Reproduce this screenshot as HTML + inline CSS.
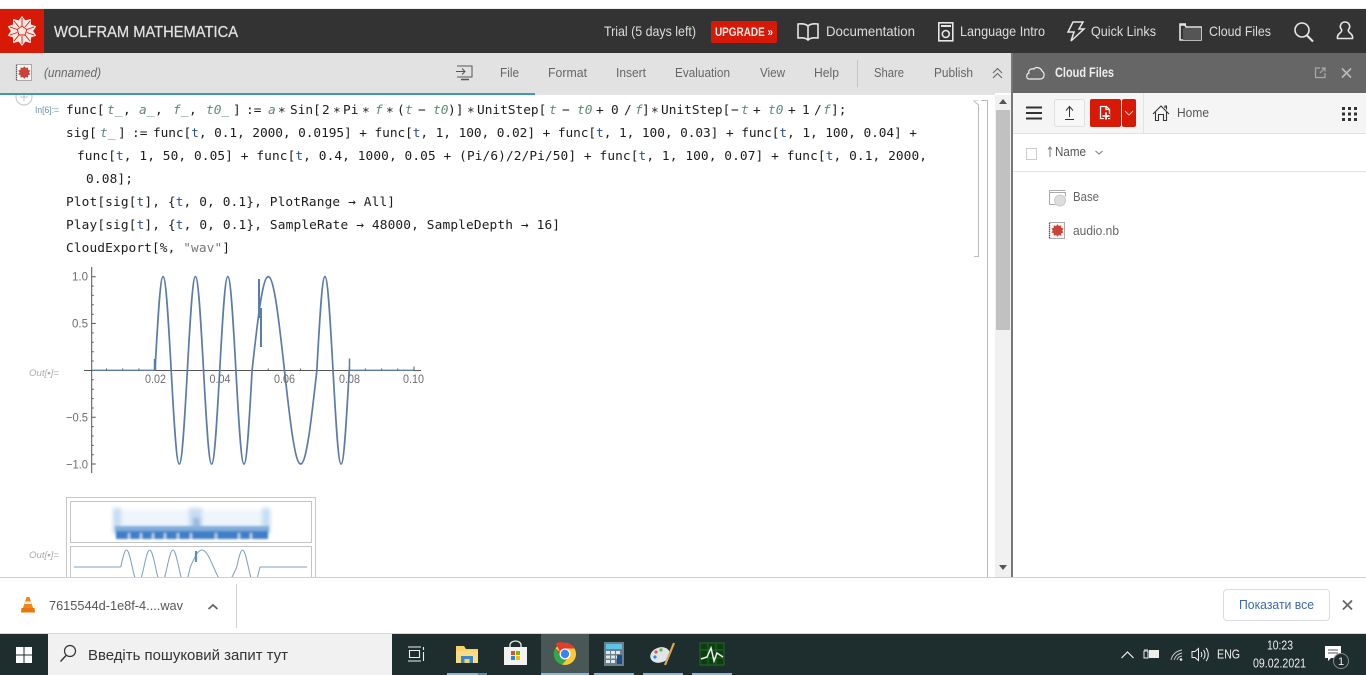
<!DOCTYPE html>
<html><head><meta charset="utf-8"><title>Wolfram Mathematica</title>
<style>html,body{margin:0;padding:0;background:#fff;overflow:hidden}svg{display:block}
text{font-family:"Liberation Sans",sans-serif}
.c{font-family:"DejaVu Sans Mono","Liberation Mono",monospace!important;font-size:12.8px;fill:#1c1c1c}
.g{fill:#5f8a72;font-style:italic}.b{fill:#2f4f8f}.s{fill:#777}
.h{font-size:14px;fill:#ddd}.t{font-size:13px;fill:#666}.a{font-size:12px;fill:#6e6e6e}
.o{font-size:9px;fill:#aaa;font-style:italic}</style></head><body>
<svg xmlns="http://www.w3.org/2000/svg" width="1366" height="675" viewBox="0 0 1366 675">
<defs>
<g id="spikey"><polygon points="0,-15 3.4,-10.600 8.800,-12.100 9,-6.500 14.300,-4.600 11.100,0 14.300,4.600 9,6.500 8.800,12.100 3.400,10.600 0,15 -3.400,10.600 -8.800,12.100 -9,6.500 -14.300,4.600 -11.100,0 -14.300,-4.600 -9,-6.500 -8.800,-12.100 -3.400,-10.600"/></g>
<path id="wave" fill="none" vector-effect="non-scaling-stroke" d="M0 0
c2.64,-48 5.16,-93.7 8.09,-93.7 c2.93,0 5.45,45.7 8.09,93.7 c2.64,48 5.16,93.7 8.09,93.7 c2.93,0 5.45,-45.7 8.09,-93.7
c2.64,-48 5.16,-93.7 8.09,-93.7 c2.93,0 5.45,45.7 8.09,93.7 c2.64,48 5.16,93.7 8.09,93.7 c2.93,0 5.45,-45.7 8.09,-93.7
c2.64,-48 5.16,-93.7 8.09,-93.7 c2.93,0 5.45,45.7 8.09,93.7 c2.64,48 5.16,93.7 8.09,93.7 c2.93,0 5.45,-45.7 8.09,-93.7
c5.28,-48 10.33,-93.7 16.19,-93.7 c5.86,0 10.91,45.7 16.19,93.7 c5.28,48 10.33,93.7 16.19,93.7 c5.86,0 10.91,-45.7 16.19,-93.7
c2.64,-48 5.16,-93.7 8.09,-93.7 c2.93,0 5.45,45.7 8.09,93.7 c2.64,48 5.16,93.7 8.09,93.7 c2.93,0 5.45,-45.7 8.09,-93.7"/>
<filter id="bl" x="-20%" y="-20%" width="140%" height="140%"><feGaussianBlur stdDeviation="2.200"/></filter>
<filter id="bl2" x="-10%" y="-30%" width="120%" height="160%"><feGaussianBlur stdDeviation="1"/></filter>
</defs>
<rect width="1366" height="675" fill="#fff"/>

<!-- notebook -->
<circle cx="24" cy="97" r="8" fill="#fff" stroke="#c4c4c4"/>
<path d="M24 93v8M20 97h8" stroke="#c4c4c4"/>
<text x="35" y="113" font-size="9.500" fill="#6d8fae" textLength="24" lengthAdjust="spacingAndGlyphs">In[6]:=</text>
<text class="c" y="114"><tspan x="66">func[</tspan><tspan x="107" class="g">t_</tspan><tspan x="123">,</tspan><tspan x="139" class="g">a_</tspan><tspan x="155">,</tspan><tspan x="173" class="g">f_</tspan><tspan x="189">,</tspan><tspan x="206" class="g">t0_</tspan><tspan x="233">]</tspan><tspan x="246">:=</tspan><tspan x="268" class="g">a</tspan><tspan x="278">∗</tspan><tspan x="290">Sin[</tspan><tspan x="322">2</tspan><tspan x="333">∗</tspan><tspan x="343">Pi</tspan><tspan x="362">∗</tspan><tspan x="375" class="g">f</tspan><tspan x="386">∗</tspan><tspan x="397">(</tspan><tspan x="405" class="g">t</tspan><tspan x="418">−</tspan><tspan x="433" class="g">t0</tspan><tspan x="448">)]</tspan><tspan x="467">∗</tspan><tspan x="477">UnitStep[</tspan><tspan x="549" class="g">t</tspan><tspan x="562">−</tspan><tspan x="577" class="g">t0</tspan><tspan x="596">+</tspan><tspan x="611">0</tspan><tspan x="624">/</tspan><tspan x="635" class="g">f</tspan><tspan x="642">]</tspan><tspan x="651">∗</tspan><tspan x="661">UnitStep[</tspan><tspan x="731">−</tspan><tspan x="741" class="g">t</tspan><tspan x="753">+</tspan><tspan x="768" class="g">t0</tspan><tspan x="788">+</tspan><tspan x="802">1</tspan><tspan x="814">/</tspan><tspan x="823" class="g">f</tspan><tspan x="831">];</tspan></text>
<text class="c" y="137"><tspan x="66">sig[</tspan><tspan x="100" class="g">t_</tspan><tspan x="118">]</tspan><tspan x="132">:=</tspan></text>
<text class="c" x="153" y="137" textLength="764">func[<tspan class="b">t</tspan>, 0.1, 2000, 0.0195] + func[<tspan class="b">t</tspan>, 1, 100, 0.02] + func[<tspan class="b">t</tspan>, 1, 100, 0.03] + func[<tspan class="b">t</tspan>, 1, 100, 0.04] +</text>
<text class="c" x="77" y="160" textLength="850">func[<tspan class="b">t</tspan>, 1, 50, 0.05] + func[<tspan class="b">t</tspan>, 0.4, 1000, 0.05 + (Pi/6)/2/Pi/50] + func[<tspan class="b">t</tspan>, 1, 100, 0.07] + func[<tspan class="b">t</tspan>, 0.1, 2000,</text>
<text class="c" x="86" y="183" textLength="47">0.08];</text>
<text class="c" x="66" y="206" textLength="329">Plot[sig[<tspan class="b">t</tspan>], {<tspan class="b">t</tspan>, 0, 0.1}, PlotRange → All]</text>
<text class="c" x="66" y="229" textLength="494">Play[sig[<tspan class="b">t</tspan>], {<tspan class="b">t</tspan>, 0, 0.1}, SampleRate → 48000, SampleDepth → 16]</text>
<text class="c" x="66" y="252" textLength="164">CloudExport[%, <tspan class="s">"wav"</tspan>]</text>

<!-- plot -->
<g stroke="#555" stroke-width="1" fill="none">
<path d="M84 370.500H421M91.700 267V473"/>
<path d="M155 370.500v-4M219.700 370.500v-4M284.500 370.500v-4M349.200 370.500v-4M414 370.500v-4M106.500 370.500v-2M122.700 370.500v-2M138.900 370.500v-2M171.200 370.500v-2M187.400 370.500v-2M203.600 370.500v-2M235.900 370.500v-2M252.100 370.500v-2M268.300 370.500v-2M300.600 370.500v-2M316.800 370.500v-2M333 370.500v-2M365.400 370.500v-2M381.600 370.500v-2M397.800 370.500v-2"/>
<path d="M91.700 276.700h4M91.700 323.500h4M91.700 417.200h4M91.700 464h4M91.700 286h2M91.700 295.400h2M91.700 304.800h2M91.700 314.200h2M91.700 332.900h2M91.700 342.300h2M91.700 351.700h2M91.700 361h2M91.700 379.800h2M91.700 389.200h2M91.700 398.600h2M91.700 408h2M91.700 426.600h2M91.700 436h2M91.700 445.400h2M91.700 454.800h2"/>
</g>
<g stroke="#5b7ba8" stroke-width="1.700" fill="none">
<path d="M92 370.300H155M349 370.300H414" stroke-width="1.300"/>
<use href="#wave" x="155" y="370.300"/>
<path d="M154.500 370V359M155.500 370V361" stroke-width="1.500"/>
<path d="M349.500 370V358.500" stroke-width="1.500"/>
<path d="M259 279V318M261 308V347M259.500 312h2" stroke-width="2"/>
</g>
<text class="a" x="145" y="383" textLength="21" lengthAdjust="spacingAndGlyphs">0.02</text><text class="a" x="209.500" y="383" textLength="21" lengthAdjust="spacingAndGlyphs">0.04</text><text class="a" x="274" y="383" textLength="21" lengthAdjust="spacingAndGlyphs">0.06</text><text class="a" x="339" y="383" textLength="21" lengthAdjust="spacingAndGlyphs">0.08</text><text class="a" x="403" y="383" textLength="21" lengthAdjust="spacingAndGlyphs">0.10</text>
<text class="a" x="72" y="280.500" textLength="16" lengthAdjust="spacingAndGlyphs">1.0</text><text class="a" x="72" y="327.500" textLength="16" lengthAdjust="spacingAndGlyphs">0.5</text><text class="a" x="66" y="421.500" textLength="22" lengthAdjust="spacingAndGlyphs">−0.5</text><text class="a" x="66" y="468.500" textLength="22" lengthAdjust="spacingAndGlyphs">−1.0</text>
<text class="o" x="29" y="376" textLength="30" lengthAdjust="spacingAndGlyphs">Out[▪]=</text>

<!-- audio output -->
<rect x="66.500" y="497.500" width="249" height="90" fill="#fff" stroke="#c8c8c8"/>
<rect x="70.500" y="501.500" width="241" height="41" fill="#fff" stroke="#c4c4c4"/>
<rect x="70.500" y="546.500" width="241" height="40" fill="#fff" stroke="#c4c4c4"/>
<g filter="url(#bl)">
<rect x="113" y="510" width="158" height="18" fill="#e3eef8" opacity=".6"/>
<rect x="113" y="508" width="8" height="26" fill="#c6dcf1"/>
<rect x="189" y="508" width="13" height="24" fill="#c9ddf1"/>
<rect x="262" y="508" width="8" height="26" fill="#c6dcf1"/>
<rect x="193" y="518" width="7" height="10" fill="#8db6df"/>
</g>
<g filter="url(#bl2)">
<rect x="115" y="526" width="154" height="6" fill="#82aedd"/>
<rect x="116" y="531" width="152" height="8" fill="#3f7fc6"/>
<path d="M129 533v6M141 533v6M153 533v6M165 533v6M178 533v6M191 533v6M216 533v6M239 533v6M251 533v6" stroke="#bcd5ec" stroke-width="2.400"/>
</g>
<g stroke="#7fa0bc" stroke-width="1" fill="none">
<path d="M74 567H120.700M260 567H307"/>
<g transform="translate(120.700 567) scale(.717 .181)"><use href="#wave"/></g>
<path d="M196 551V562" stroke="#5f8fb8" stroke-width="2.200"/>
</g>
<text class="o" x="29" y="558" textLength="30" lengthAdjust="spacingAndGlyphs">Out[▪]=</text>

<!-- cell brackets -->
<path d="M973.500 100.500L978.500 105V256.500H974" fill="none" stroke="#bbb"/>
<path d="M973.500 100.500H978.500" stroke="#ddd"/>
<path d="M981 100.500H987.500V577" fill="none" stroke="#bbb"/>
<!-- scrollbar -->
<rect x="995" y="95" width="16" height="482" fill="#f1f1f1"/>
<rect x="996" y="110" width="14" height="220" fill="#c1c1c1"/>
<path d="M999 104l4-5 4 5zM999 565l4 5 4-5z" fill="#555"/>

<!-- top -->
<rect x="0" y="0" width="1366" height="9" fill="#fff"/>
<rect x="0" y="8.500" width="1366" height="1" fill="#ddd"/>
<rect x="0" y="9" width="1366" height="44" fill="#333"/>
<rect x="0" y="9" width="44" height="44" fill="#d71a07"/>
<g transform="translate(22 31)"><use href="#spikey" fill="#f8e8e4"/>
<path d="M0-5V-13M0 5V13M4.800-1.500L12-4M-4.800-1.500L-12-4M4.800 1.500L12 4M-4.800 1.500L-12 4M3-4L8-10M-3-4L-8-10M3 4L8 10M-3 4L-8 10" stroke="#d71a07" stroke-width=".9"/>
<polygon points="0,-5 4.800,-1.500 3,4 -3,4 -4.800,-1.500" fill="#f8e8e4" stroke="#d71a07" stroke-width=".9"/></g>
<text x="54" y="37" font-size="16" fill="#e2e2e2" stroke="#e2e2e2" stroke-width=".25" textLength="184" lengthAdjust="spacingAndGlyphs">WOLFRAM MATHEMATICA</text>
<text class="h" x="604" y="36" textLength="92" lengthAdjust="spacingAndGlyphs">Trial (5 days left)</text>
<rect x="711" y="21" width="66" height="22" rx="2" fill="#d71a07"/>
<text x="715" y="36" font-size="12" font-weight="700" fill="#f5e8e6" textLength="58" lengthAdjust="spacingAndGlyphs">UPGRADE »</text>
<g fill="none" stroke="#e6e6e6" stroke-width="1.600">
<path d="M808 26c-2-2-6-2.500-10-2v14c4-.5 8 0 10 2 2-2 6-2.500 10-2V24c-4-.5-8 0-10 2zM808 26v14"/>
<rect x="938.800" y="22.800" width="14" height="18"/><path d="M941 26h10" stroke-width="2"/><circle cx="945.800" cy="34" r="3.500"/>
<path d="M1073 22h10l-4 7h5l-13 12 3-9h-6z" stroke-width="1.500"/>
<path d="M1180 25h5l1 2h15v13h-21zM1180 25v-1h6"/><rect x="1183" y="28" width="18" height="12" fill="#555" stroke="none"/>
<circle cx="1302" cy="30" r="7"/><path d="M1307 35.500l6 6" stroke-width="2"/>
<path d="M1345 22a4.500 4.500 0 0 0-3.500 7.500c.5 1-.2 2.500-1.500 3.500-2 1.500-3 3-2.500 5.500h15c.5-2.500-.5-4-2.500-5.500-1.300-1-2-2.500-1.500-3.500a4.500 4.500 0 0 0-3.500-7.500z"/>
</g>
<text class="h" x="826" y="36" textLength="89" lengthAdjust="spacingAndGlyphs">Documentation</text>
<text class="h" x="960" y="36" textLength="85" lengthAdjust="spacingAndGlyphs">Language Intro</text>
<text class="h" x="1091" y="36" textLength="65" lengthAdjust="spacingAndGlyphs">Quick Links</text>
<text class="h" x="1209" y="36" textLength="62" lengthAdjust="spacingAndGlyphs">Cloud Files</text>

<!-- toolbar -->
<rect x="0" y="53" width="1011" height="40" fill="#e2e2e2"/>
<rect x="0" y="93" width="995" height="2" fill="#e4e4e4"/>
<rect x="0" y="93" width="535" height="2" fill="#3e98b4"/>
<rect x="16.500" y="64.500" width="15" height="16" fill="#f7f3f2" stroke="#aaa"/>
<path d="M16.500 65V80" stroke="#c9302c" stroke-width="1.400" stroke-dasharray="1 1"/>
<g transform="translate(24.300 72.500) scale(.42)"><use href="#spikey" fill="#c9433a"/></g>
<text x="44" y="77" font-size="12.500" font-style="italic" fill="#666" textLength="57" lengthAdjust="spacingAndGlyphs">(unnamed)</text>
<g fill="none" stroke="#555"><path d="M457 66h15v11h-15M456 71.500h9m-3-3l3 3-3 3"/><path d="M461 79.500h8" stroke-width="1.500"/></g>
<text class="t" x="500" y="77" textLength="19" lengthAdjust="spacingAndGlyphs">File</text>
<text class="t" x="548" y="77" textLength="39" lengthAdjust="spacingAndGlyphs">Format</text>
<text class="t" x="616" y="77" textLength="30" lengthAdjust="spacingAndGlyphs">Insert</text>
<text class="t" x="675" y="77" textLength="55" lengthAdjust="spacingAndGlyphs">Evaluation</text>
<text class="t" x="760" y="77" textLength="25" lengthAdjust="spacingAndGlyphs">View</text>
<text class="t" x="814" y="77" textLength="25" lengthAdjust="spacingAndGlyphs">Help</text>
<rect x="857" y="60" width="1" height="27" fill="#c4c4c4"/>
<text class="t" x="874" y="77" textLength="30" lengthAdjust="spacingAndGlyphs">Share</text>
<text class="t" x="934" y="77" textLength="39" lengthAdjust="spacingAndGlyphs">Publish</text>
<path d="M993 73l4.500-4.500 4.500 4.500M993 78l4.500-4.500 4.500 4.500" fill="none" stroke="#666"/>

<!-- cloud panel -->
<rect x="1011" y="53" width="2" height="524" fill="#777"/>
<rect x="1013" y="53" width="353" height="40" fill="#666"/>
<path d="M1029 79h11c5 0 5-6 2-8-1-3-6-5-8-2-4-1-6 2-5 4-3 1-3 6 0 6z" fill="none" stroke="#eee" stroke-width="1.200"/>
<text x="1055" y="77" font-size="13.500" font-weight="700" fill="#eee" textLength="59" lengthAdjust="spacingAndGlyphs">Cloud Files</text>
<path d="M1320 68h-4.500v9.500h9.500v-4.500M1320 73l5-5m-3.500 0h3.500v3.500" fill="none" stroke="#aaa" stroke-width="1.200"/>
<path d="M1342 68.500l9 9m0-9l-9 9" stroke="#bbb" stroke-width="1.600"/>
<rect x="1013" y="93" width="353" height="40" fill="#f5f5f5"/>
<rect x="1013" y="133" width="353" height="1" fill="#e2e2e2"/>
<path d="M1026 107.500h16M1026 113h16M1026 118.500h16" stroke="#333" stroke-width="2"/>
<rect x="1054.500" y="99.500" width="30" height="27" rx="2" fill="#f8f8f8" stroke="#e0e0e0"/>
<path d="M1069.500 117v-10m-3.500 3.500l3.500-4 3.500 4M1065 119.500h9" fill="none" stroke="#333"/>
<rect x="1090" y="99" width="31" height="28" rx="2" fill="#d71a07"/>
<rect x="1122" y="99" width="14" height="28" rx="2" fill="#d71a07"/>
<path d="M1100.500 106.500h6l3 3v9h-9zM1106 106.500v3h3" fill="none" stroke="#fff" stroke-width="1.300"/>
<path d="M1106 112v8M1102 116h8" stroke="#d71a07" stroke-width="4"/>
<path d="M1106 112.500v7M1102.500 116h7" stroke="#fff" stroke-width="1.800"/>
<path d="M1125 111l4 4 4-4" fill="none" stroke="#f3c0b8"/>
<rect x="1143" y="93" width="1" height="40" fill="#e2e2e2"/>
<path d="M1153 114l8-8 8 8M1155.500 112v8.500h3v-6h5v6h3V112M1165 108v-2h1.500v3.500" fill="none" stroke="#333" stroke-width="1.100"/>
<text x="1177" y="117" font-size="13" fill="#555" textLength="32" lengthAdjust="spacingAndGlyphs">Home</text>
<path d="M1342 107h3v3h-3zM1348 107h3v3h-3zM1354 107h3v3h-3zM1342 112.500h3v3h-3zM1348 112.500h3v3h-3zM1354 112.500h3v3h-3zM1342 118h3v3h-3zM1348 118h3v3h-3zM1354 118h3v3h-3z" fill="#333"/>
<rect x="1026.500" y="148.500" width="10" height="11" fill="#fff" stroke="#ccc"/>
<path d="M1050 157v-10m-2 2.500l2-2.500 2 2.500" fill="none" stroke="#777"/>
<text x="1055" y="156" font-size="13" fill="#555" textLength="31" lengthAdjust="spacingAndGlyphs">Name</text>
<path d="M1095.500 151l3.500 3 3.500-3" fill="none" stroke="#777"/>
<rect x="1013" y="171" width="353" height="1" fill="#e2e2e2"/>
<path d="M1049.500 204.500v-14h16M1049.500 192.500h16v4" fill="none" stroke="#aaa"/>
<path d="M1049.500 204.500h6" stroke="#aaa"/>
<circle cx="1060" cy="200.500" r="5.500" fill="#ddd" stroke="#ccc"/>
<text x="1073" y="201" font-size="13" fill="#666" textLength="26" lengthAdjust="spacingAndGlyphs">Base</text>
<rect x="1049.500" y="222.500" width="15" height="16" fill="#f9f6f5" stroke="#aaa"/>
<path d="M1049.500 223V238" stroke="#c9302c" stroke-width="1.400" stroke-dasharray="1 1"/>
<g transform="translate(1057.500 230.500) scale(.42)"><use href="#spikey" fill="#c9433a"/></g>
<text x="1073" y="235" font-size="13" fill="#666" textLength="46" lengthAdjust="spacingAndGlyphs">audio.nb</text>

<!-- download bar -->
<rect x="0" y="577" width="1366" height="57" fill="#fff"/>
<rect x="0" y="577" width="1366" height="1" fill="#d0d0d0"/>
<rect x="0" y="633" width="1366" height="1" fill="#d8d8d8"/>
<path d="M26.500 597h3l3.500 11h-10z" fill="#f08a16"/><path d="M25.300 601.500h5.400l.7 2.500h-6.800z" fill="#f4f0e8"/>
<path d="M21.500 608h13l.5 4.500H21z" fill="#e8760c"/>
<text x="49" y="610" font-size="12.500" fill="#555" textLength="134" lengthAdjust="spacingAndGlyphs">7615544d-1e8f-4....wav</text>
<path d="M208.500 609l4.500-4 4.500 4" fill="none" stroke="#666" stroke-width="1.800"/>
<rect x="236" y="584" width="1" height="44" fill="#d0d0d0"/>
<rect x="1223.500" y="589.500" width="106" height="31" rx="3.500" fill="#fff" stroke="#dadce0"/>
<text x="1239" y="609" font-size="12.500" fill="#3b68ad" textLength="75" lengthAdjust="spacingAndGlyphs">Показати все</text>
<path d="M1343 600.500l9 9m0-9l-9 9" stroke="#666" stroke-width="1.800"/>

<!-- taskbar -->
<rect x="0" y="634" width="1366" height="41" fill="#1e2d2d"/>
<path d="M16 647h7.500v7.500H16zM24.500 647H32v7.500h-7.500zM16 655.500h7.500V663H16zM24.500 655.500H32V663h-7.500z" fill="#fff"/>
<rect x="48" y="634" width="344" height="41" fill="#f1f1f1"/>
<circle cx="70" cy="651" r="5.500" fill="none" stroke="#333" stroke-width="1.200"/><path d="M66 655.500l-5.500 6" stroke="#333" stroke-width="1.400"/>
<text x="88" y="660" font-size="14.500" fill="#333" textLength="200" lengthAdjust="spacingAndGlyphs">Введіть пошуковий запит тут</text>
<path d="M408 647h13M408 661h13M409.500 650.500h10v7h-10zM423.500 647v3M423.500 652v9" fill="none" stroke="#eee" stroke-width="1.100"/>
<path d="M456 646h8l2 3h12v14h-22z" fill="#f8d26a"/><rect x="456" y="651" width="22" height="12" fill="#fbdc82"/><rect x="461" y="656" width="12" height="7" fill="#3b88c3"/><rect x="464.500" y="659" width="5" height="4" fill="#f8d26a"/>
<rect x="504" y="647" width="23" height="18" fill="#f2f2f2"/><path d="M510 647v-2a5.500 4 0 0 1 11 0v2" fill="none" stroke="#eee" stroke-width="1.300"/>
<rect x="511" y="651" width="4" height="4" fill="#e74c2b"/><rect x="516" y="651" width="4" height="4" fill="#7fba00"/><rect x="511" y="656" width="4" height="4" fill="#1e90d8"/><rect x="516" y="656" width="4" height="4" fill="#fcb900"/>
<rect x="541" y="634" width="48" height="41" fill="#4a5757"/>
<circle cx="565" cy="654" r="11" fill="#fcc934"/>
<path d="M565 643a11 11 0 0 1 9.500 5.500H565a5.500 5.500 0 0 0-5 3l-4.500-8a11 11 0 0 1 9.500-.5zM555.500 648.500a11 11 0 0 0 4.500 15.500l5-8.500z" fill="#e33b2e"/>
<path d="M555.500 648l5 8.600a5.500 5.500 0 0 0 7 2.300L562 664.600A11 11 0 0 1 555.500 648z" fill="#2da94f"/>
<circle cx="565" cy="654" r="5.500" fill="#fff"/><circle cx="565" cy="654" r="4.200" fill="#3f82e8"/>
<rect x="604" y="642" width="20" height="24" fill="#6b7f8c"/><rect x="606" y="644" width="16" height="5" fill="#5cc5e6"/>
<path d="M606 651h4v3h-4zM611 651h4v3h-4zM616 651h4v3h-4zM606 655.500h4v3h-4zM611 655.500h4v3h-4zM616 655.500h4v3h-4zM606 660h4v3h-4zM611 660h4v3h-4z" fill="#dfe7ea"/><rect x="617" y="655" width="5" height="9" fill="#1a4f8f"/>
<ellipse cx="660" cy="655" rx="10" ry="7.500" fill="#dfe6ea" transform="rotate(-20 660 655)"/><circle cx="656" cy="652" r="1.600" fill="#e05a3a"/><circle cx="661" cy="650" r="1.600" fill="#6cb33f"/><circle cx="655" cy="657" r="1.600" fill="#3a86d8"/><path d="M674 643l-9 22" stroke="#d8a75a" stroke-width="2.200"/>
<rect x="700" y="643" width="24" height="22" fill="#0f3d12" stroke="#1f6a22"/><path d="M708 643v22M716 643v22M700 650h24M700 658h24" stroke="#1f6a22"/><path d="M701 659l6-2 4-9 3 13 3-8 6 4" fill="none" stroke="#eee" stroke-width="1.500"/>
<rect x="447" y="673" width="31" height="2" fill="#8ab8d4"/><rect x="478" y="673" width="9" height="2" fill="#5f8aa0"/><rect x="541" y="673" width="48" height="2" fill="#8ab8d4"/><rect x="594" y="673" width="40" height="2" fill="#8ab8d4"/><rect x="643" y="673" width="40" height="2" fill="#8ab8d4"/><rect x="692" y="673" width="40" height="2" fill="#8ab8d4"/>
<!-- tray -->
<path d="M1121.500 658l6-6 6 6" fill="none" stroke="#eee" stroke-width="1.200"/>
<path d="M1144 651h4v7h-4zM1145 649v2M1147 649v2" fill="none" stroke="#eee"/><rect x="1149" y="650" width="10" height="8" fill="#eee"/>
<path d="M1171 660c1-5 5-9 11-10M1174 660c1-3 3-6 8-7M1177 660c.5-2 2-3.500 5-4" fill="none" stroke="#ccc" stroke-width=".9"/><circle cx="1181" cy="659.500" r="1.300" fill="#eee"/>
<path d="M1192 651.500h3l3.500-3v12l-3.500-3h-3zM1201 652c1 1.500 1 3.500 0 5M1203.500 650c2 2.500 2 6.500 0 9M1206 648c3 3.500 3 9.500 0 13" fill="none" stroke="#eee"/>
<text x="1217" y="658.500" font-size="13" fill="#eee" textLength="23" lengthAdjust="spacingAndGlyphs">ENG</text>
<text x="1267" y="649.500" font-size="13" fill="#eee" textLength="26" lengthAdjust="spacingAndGlyphs">10:23</text>
<text x="1253" y="667.500" font-size="13" fill="#eee" textLength="53" lengthAdjust="spacingAndGlyphs">09.02.2021</text>
<path d="M1325 646h16v12h-10l-3 3v-3h-3z" fill="#fff"/><path d="M1328 650h10M1328 653h10" stroke="#555"/>
<circle cx="1341" cy="661" r="7.500" fill="#1e2d2d" stroke="#888"/>
<text x="1338" y="665" font-size="11" fill="#eee">1</text>
</svg>
</body></html>
